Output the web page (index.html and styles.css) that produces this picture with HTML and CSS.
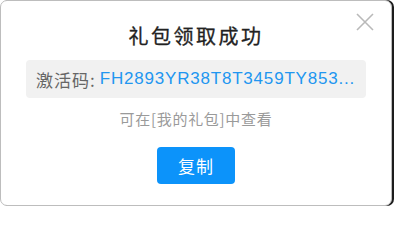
FILE: index.html
```html
<!DOCTYPE html>
<html lang="zh">
<head>
<meta charset="utf-8">
<link rel="stylesheet" href="styles.css">
</head>
<body>
<div class="dialog">
  <button class="close" aria-label="关闭">
    <svg width="20" height="20" viewBox="0 0 20 20"><path d="M2 2 L18 18 M18 2 L2 18" stroke="#b9b9b9" stroke-width="1.6" fill="none"/></svg>
  </button>
  <div class="title">礼包领取成功</div>
  <div class="code-box"><span class="label">激活码:</span><span class="code">FH2893YR38T8T3459TY853...</span></div>
  <div class="hint">可在[我的礼包]中查看</div>
  <button class="copy">复制</button>
</div>
</body>
</html>
```
FILE: styles.css
```css
html, body {
  margin: 0;
  padding: 0;
  background: #fff;
}
body {
  width: 394px;
  height: 208px;
  font-family: "Liberation Sans", "Noto Sans CJK SC", sans-serif;
}
.dialog {
  position: relative;
  box-sizing: border-box;
  width: 392px;
  height: 206px;
  background: #fff;
  border: 1px solid #bdbdbd;
  border-radius: 7px;
  box-shadow: 2px 0 0 #1c1c1c;
  display: flex;
  flex-direction: column;
  align-items: center;
  padding-top: 23px;
}
.close {
  position: absolute;
  top: 11px;
  right: 16px;
  width: 20px;
  height: 20px;
  padding: 0;
  border: 0;
  background: none;
}
.close svg { display: block; }
.title {
  font-family: "Noto Sans CJK SC", sans-serif;
  font-size: 20px;
  line-height: 24px;
  font-weight: 400;
  letter-spacing: 2.5px;
  color: #222;
  -webkit-text-stroke: 0.3px #222;
}
.code-box {
  margin-top: 12px;
  box-sizing: border-box;
  width: 340px;
  height: 38px;
  background: #f1f1f1;
  border-radius: 4px;
  display: flex;
  align-items: center;
  padding-left: 10px;
  font-size: 17px;
}
.label {
  font-family: "Noto Sans CJK SC", sans-serif;
  color: #666;
  letter-spacing: 1px;
  margin-right: 4px;
}
.code {
  color: #2196f0;
  letter-spacing: 0.8px;
}
.hint {
  margin-top: 11px;
  font-family: "Noto Sans CJK SC", sans-serif;
  font-size: 15px;
  line-height: 20px;
  letter-spacing: 0.7px;
  color: #9a9a9a;
}
.copy {
  margin-top: 18px;
  width: 78px;
  height: 37px;
  border: 0;
  border-radius: 4px;
  background: #0c93fa;
  color: #fff;
  font-family: "Noto Sans CJK SC", sans-serif;
  font-size: 17px;
  letter-spacing: 1px;
  padding: 0;
}
```
